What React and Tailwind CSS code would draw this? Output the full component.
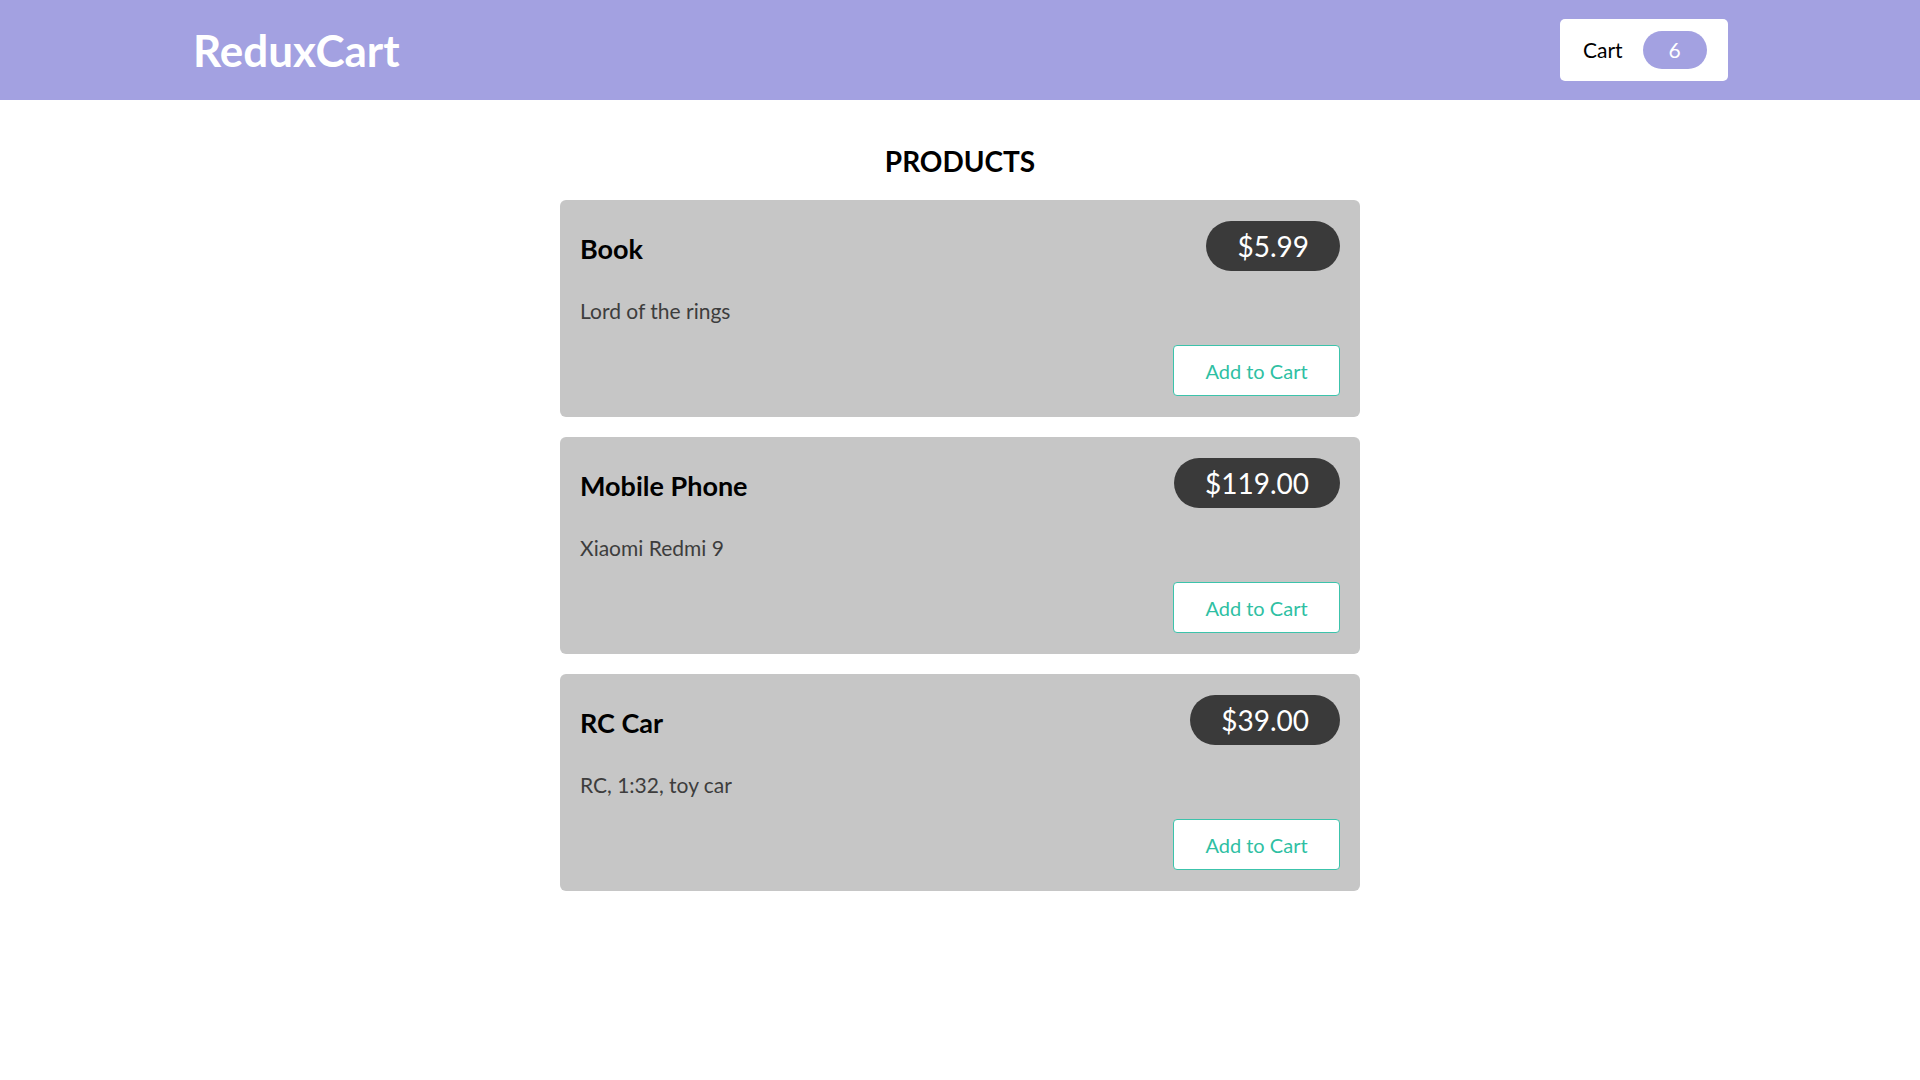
import { useState } from "react";

const PRODUCTS = [
    { id: 1, title: "Book", price: 5.99, description: "Lord of the rings" },
    { id: 2, title: "Mobile Phone", price: 119, description: "Xiaomi Redmi 9" },
    { id: 3, title: "RC Car", price: 39, description: "RC, 1:32, toy car" },
];

const font = { fontFamily: "Lato, 'Noto Sans', sans-serif" };

function Header({ count }) {
    return (
        <header className="h-[100px] bg-[#a3a1e1] flex items-center justify-between pl-[193px] pr-[192px]">
            <h1 className="text-[44px] font-bold text-white leading-none">ReduxCart</h1>
            <button className="h-[62px] w-[168px] bg-white rounded-[5px] flex items-center pl-[23px]">
                <span className="text-[21px] text-black">Cart</span>
                <span className="ml-[20px] w-[64px] h-[38px] rounded-full bg-[#a3a1e1] text-white text-[21px] flex items-center justify-center">
                    {count}
                </span>
            </button>
        </header>
    );
}

function ProductItem({ title, price, description, onAdd }) {
    return (
        <li className="bg-[#c6c6c6] rounded-md px-5 pt-[21px] pb-[21px] flex flex-col">
            <div className="flex items-center justify-between">
                <h3 className="pt-[6px] text-[27px] font-bold text-black">{title}</h3>
                <div className="h-[50px] px-[31px] rounded-full bg-[#3a3a3a] text-white text-[28px] flex items-center">
                    ${price.toFixed(2)}
                </div>
            </div>
            <p className="mt-[25px] text-[21px] leading-[30px] text-[#3d3d3d]">{description}</p>
            <button
                onClick={onAdd}
                className="self-end mt-[19px] w-[167px] h-[51px] bg-white border border-[#3cc3ab] rounded text-[#2fbfa3] text-[20px]"
            >
                Add to Cart
            </button>
        </li>
    );
}

export default function App() {
    const [count, setCount] = useState(6);

    return (
        <div className="min-h-screen bg-white" style={font}>
            <Header count={count} />
            <main className="w-[800px] mx-auto">
                <h2 className="mt-[44px] mb-[22px] text-center text-[28px] leading-[34px] font-bold text-black">PRODUCTS</h2>
                <ul className="flex flex-col gap-5">
                    {PRODUCTS.map((p) => (
                        <ProductItem key={p.id} {...p} onAdd={() => setCount((c) => c + 1)} />
                    ))}
                </ul>
            </main>
        </div>
    );
}
